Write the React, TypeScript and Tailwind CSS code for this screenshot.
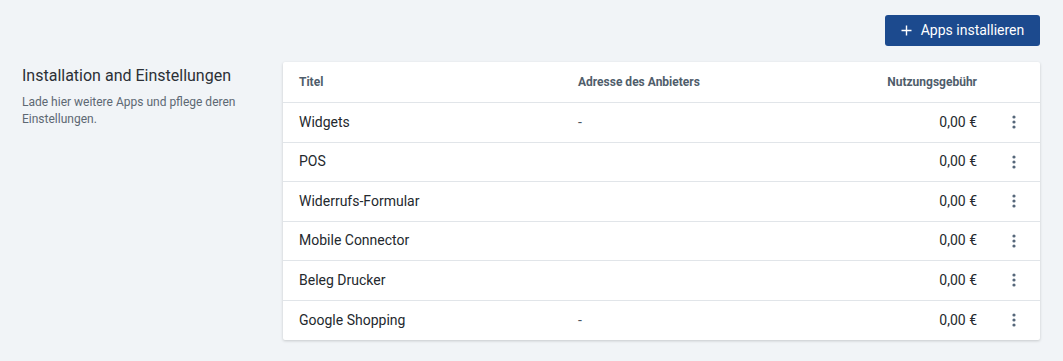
import React from 'react'

const rows = [
  { title: 'Widgets', address: '-', fee: '0,00 €' },
  { title: 'POS', address: '', fee: '0,00 €' },
  { title: 'Widerrufs-Formular', address: '', fee: '0,00 €' },
  { title: 'Mobile Connector', address: '', fee: '0,00 €' },
  { title: 'Beleg Drucker', address: '', fee: '0,00 €' },
  { title: 'Google Shopping', address: '-', fee: '0,00 €' },
]

function DotsIcon() {
  return (
    <svg width="4" height="14" viewBox="0 0 4 14" className="text-[#56677a]">
      <circle cx="2" cy="2" r="1.6" fill="currentColor" />
      <circle cx="2" cy="7" r="1.6" fill="currentColor" />
      <circle cx="2" cy="12" r="1.6" fill="currentColor" />
    </svg>
  )
}

export default function App() {
  return (
    <div className="min-h-[361px] w-full bg-[#f1f4f7] pl-[22px] pr-[23px] pt-[15px] font-['Roboto',sans-serif]">
      <div className="flex justify-end">
        <button className="flex h-[31px] w-[155px] items-center justify-center gap-[9px] rounded-[3px] bg-[#1c4a8e] text-[14px] text-white">
          <svg width="11" height="11" viewBox="0 0 11 11">
            <path d="M5.5 0.5v10M0.5 5.5h10" stroke="white" strokeWidth="1.4" />
          </svg>
          <span>Apps installieren</span>
        </button>
      </div>

      <div className="mt-4 flex">
        <div className="w-[261px] shrink-0">
          <h2 className="mt-[3px] text-[16px] leading-[22px] text-[#2b3036]">Installation and Einstellungen</h2>
          <p className="mt-[7px] text-[12px] leading-[17px] text-[#5d6873]">
            Lade hier weitere Apps und pflege deren Einstellungen.
          </p>
        </div>

        <div className="flex-1 rounded-[2px] bg-white shadow-[0_1px_3px_rgba(0,0,0,0.18)]">
          <div className="flex h-[41px] items-center border-b border-[#e1e5e9] pl-4 text-[12px] font-bold text-[#4f5d6b]">
            <div className="w-[279px]">Titel</div>
            <div className="flex-1">Adresse des Anbieters</div>
            <div className="text-right">Nutzungsgebühr</div>
            <div className="w-[63px]" />
          </div>
          {rows.map((r, i) => (
            <div
              key={r.title}
              className={
                'flex h-[39.5px] items-center pl-4 text-[14px] text-[#24292e] ' +
                (i < rows.length - 1 ? 'border-b border-[#e1e5e9]' : '')
              }
            >
              <div className="w-[279px]">{r.title}</div>
              <div className="flex-1 text-[#4a5560]">{r.address}</div>
              <div className="text-right">{r.fee}</div>
              <div className="flex w-[63px] justify-start pl-[35px]">
                <DotsIcon />
              </div>
            </div>
          ))}
        </div>
      </div>
    </div>
  )
}
